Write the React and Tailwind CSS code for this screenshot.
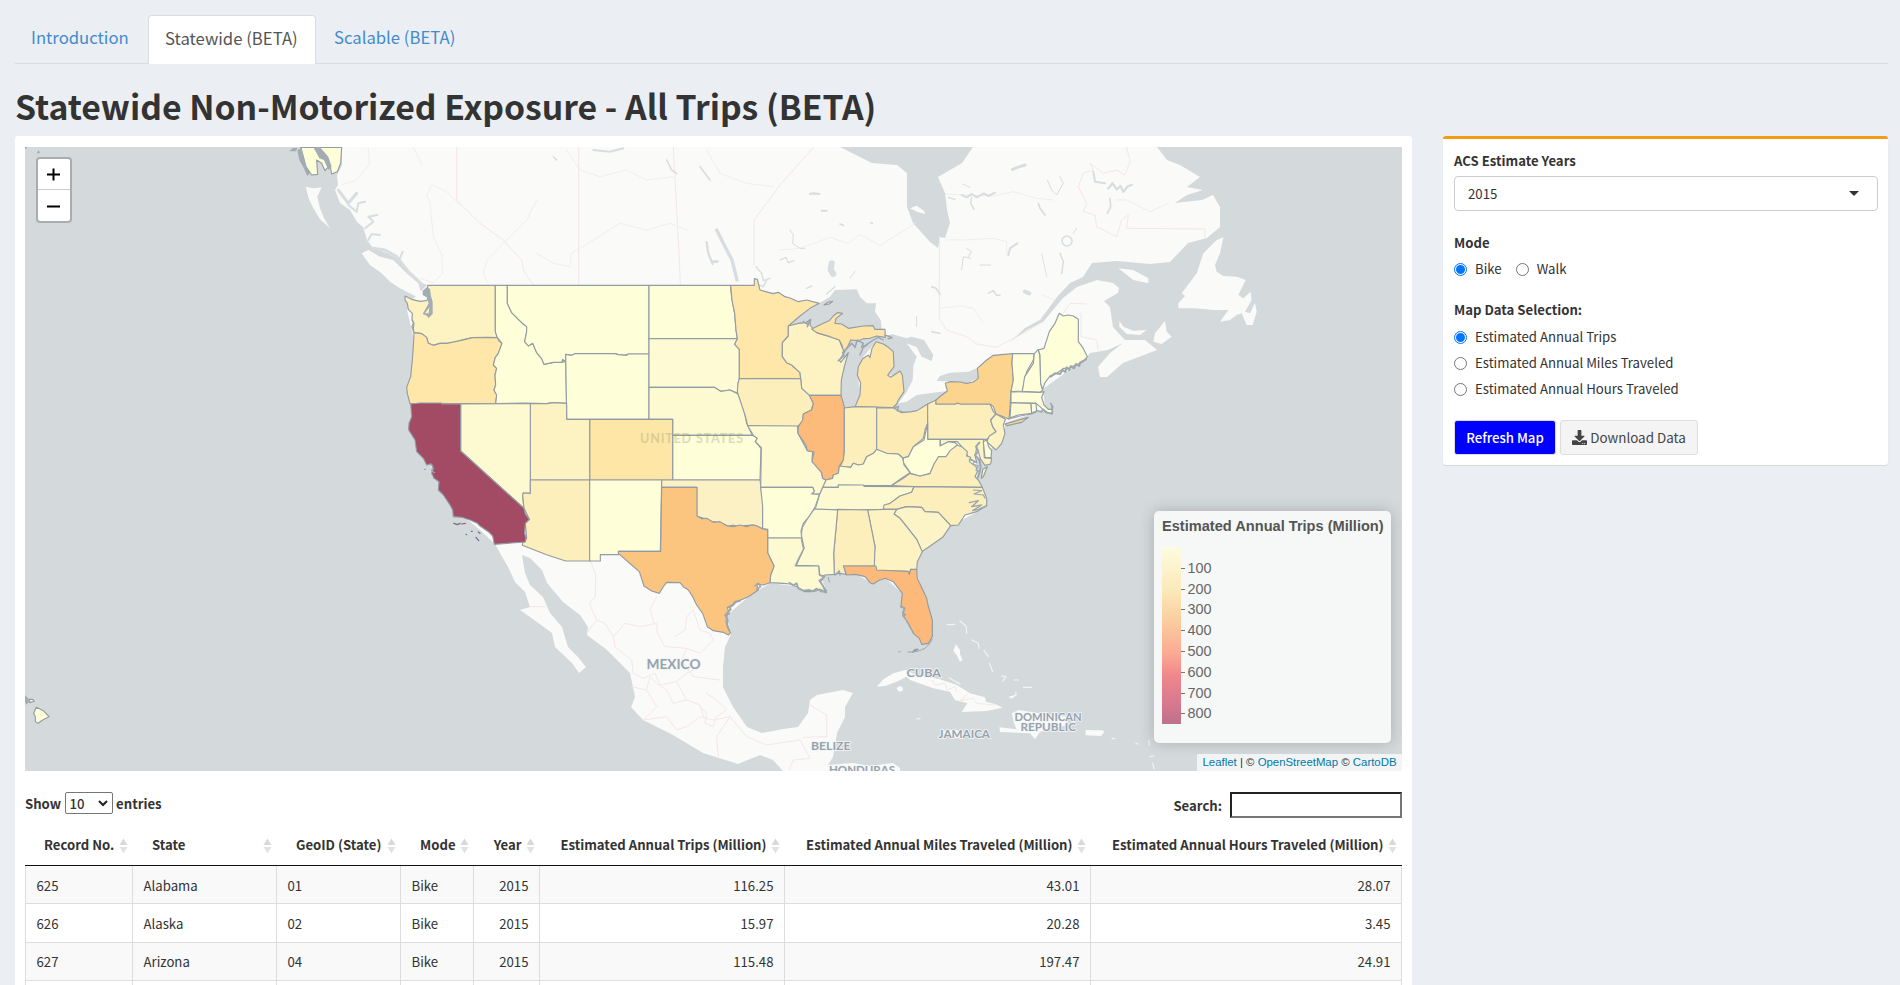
import React from "react";
import { FaDownload } from "react-icons/fa";

const LAND = "#fafaf8";
const WATER = "#d4d9dc";

// Coordinate frames for map geometry, in thirds of a map unit
const FRAME = {
  nw: "translate(20 140) scale(0.333333)",
  west: "translate(380 260) scale(0.333333)",
  east: "translate(720 260) scale(0.333333)",
  south: "translate(500 460) scale(0.333333)",
  canada: "translate(780 140) scale(0.333333)",
  carib: "translate(860 580) scale(0.333333)",
  hawaii: "translate(20 530) scale(0.333333)",
};

const CONTINENT =
  "342,147 342,165 337,175 338,185 335,190 340,203 350,210 357,222 363,227 367,240 373,248 387,253 400,260 410,272 420,282 427,285 412,300 407,310 414,340 410,390 412,425 430,465 450,505 480,530 495,544 500,553 508,567 515,582 525,592 530,607 520,610 537,622 552,633 555,647 572,663 579,673 586,667 578,657 568,647 562,627 550,613 543,597 530,585 525,573 522,555 530,558 542,570 547,583 563,602 580,615 588,627 587,635 607,650 630,673 635,697 631,707 643,720 673,735 703,753 738,764 760,755 773,760 783,771 783,775 900,775 900,768 893,763 870,766 853,763 828,765 833,757 837,733 845,717 845,707 853,693 843,690 817,695 810,700 808,713 798,727 783,729 762,733 747,727 733,707 723,687 723,667 725,647 731,634 727,615 753,593 771,583 807,588 825,587 820,575 856,574 873,584 885,578 902,593 913,633 930,635 930,615 916,570 917,563 922,551 951,526 977,512 984,506 979,487 976,460 990,450 1005,433 1005,423 1037,412 1045,407 1043,389 1087,357 1090,353 1108,350 1123,343 1110,353 1098,367 1100,377 1107,377 1123,363 1157,350 1145,340 1125,340 1113,327 1110,307 1104,301 1118,293 1119,288 1113,283 1097,280 1077,287 1063,298 1043,322 1027,330 1010,342 1025,328 1040,320 1057,297 1070,283 1083,277 1092,263 1117,261 1150,264 1170,262 1188,243 1207,238 1220,227 1220,207 1213,195 1202,200 1175,203 1187,195 1203,190 1187,187 1200,177 1180,165 1167,160 1157,147 973,147 962,163 938,177 945,193 947,210 950,223 945,238 940,237 938,248 930,242 913,223 907,207 907,173 897,165 872,163 840,147";

const ISLANDS = [
  ["nw", "1025,340 1045,330 1080,350 1120,360 1160,400 1195,430 1205,465 1185,468 1140,445 1110,425 1085,400 1050,375"],
  ["nw", "857,140 880,145 905,142 892,170 900,205 912,235 930,265 900,238 880,205 866,175"],
  ["canada", "1330,292 1310,300 1270,340 1250,400 1235,420 1205,460 1215,468 1195,490 1195,505 1245,505 1300,510 1345,510 1320,545 1350,540 1370,525 1385,520 1400,555 1418,555 1430,515 1425,488 1410,520 1395,515 1415,480 1412,455 1390,475 1375,465 1397,420 1370,410 1330,408 1310,395 1305,375 1320,340"],
  ["canada", "1018,542 1030,560 1060,572 1100,570 1080,585 1040,582 1018,560"],
  ["canada", "1120,605 1125,580 1155,543 1160,575 1175,590 1145,612"],
  ["canada", "1015,385 1060,390 1105,415 1105,430 1060,420"],
  ["canada", "390,205 410,197 432,212 435,222 412,216"],
  ["carib", "50,320 70,298 100,280 135,270 170,285 240,298 290,315 330,340 375,352 378,365 405,372 428,383 380,393 305,396 322,370 285,360 270,335 220,325 150,300 140,290 110,305 75,318"],
  ["carib", "110,325 118,318 128,322 128,332 116,335"],
  ["carib", "455,400 475,390 540,400 620,410 620,435 570,450 540,455 525,478 510,460 420,456 418,442 470,448 462,430"],
  ["carib", "677,450 728,451 733,456 723,468 677,466"],
  ["carib", "245,452 290,450 325,465 290,475 250,465"],
  ["carib", "283,205 288,193 300,210 300,222 308,240 300,246 290,225 280,212"],
  ["carib", "446,350 465,345 468,332 470,345 455,356"],
];

const LAKES = [
  ["east", "205,198 240,165 298,130 330,110 345,90 410,88 420,110 440,130 468,130 465,155 482,180 485,205 492,215 497,232 515,222 560,235 575,230 612,240 640,285 635,303 605,290 590,262 560,250 590,290 580,318 578,360 560,395 535,430 560,425 590,405 640,398 682,393 650,418 623,432 575,457 545,458 520,443 550,350 503,345 520,275 468,245 430,290 412,345 422,400 400,445 372,446 362,400 364,350 372,280 360,240 275,215 240,190"],
  ["east", "650,362 660,348 690,338 745,335 770,325 775,355 740,370 690,365"],
];

const A = "#fefed8", B = "#fdf9d0", C = "#fdf2c1", D = "#fdefbc", E = "#fee7a9";
const STATES = [
  ["west", C, "143,76 346,76 346,215 352,233 320,232 278,233 240,242 225,247 200,250 180,250 160,256 145,250 140,232 125,221 102,218 100,205 102,190 96,180 97,160 85,148 82,130 75,120 75,108 95,118 120,124 140,122 150,100 143,90"],
  ["west", E, "102,218 125,221 140,232 145,250 160,256 180,250 200,250 240,242 278,233 352,233 357,243 366,250 355,280 346,292 340,315 350,325 345,345 347,375 342,390 350,405 347,431 185,431 90,431 82,400 80,382 92,350 97,300 100,260"],
  ["west", A, "346,76 382,76 382,130 395,158 415,178 430,192 440,200 440,215 434,245 445,258 458,250 470,278 485,296 492,313 520,307 545,307 557,304 560,430 520,428 500,431 430,429 347,431 350,405 342,390 347,375 345,345 350,325 340,315 346,292 355,280 366,250 352,233 346,215"],
  ["west", A, "382,76 807,76 807,282 745,282 735,286 715,284 705,281 585,281 575,286 557,283 557,305 548,298 545,307 520,307 492,313 485,296 470,278 458,250 445,258 434,245 440,215 440,200 430,192 415,178 395,158 382,130"],
  ["west", A, "557,283 575,286 585,281 705,281 715,284 740,286 745,282 807,282 807,478 560,478"],
  ["west", A, "807,76 1051,76 1056,120 1064,160 1068,210 1072,236 807,236"],
  ["west", "#fefbd4", "807,236 1072,236 1064,253 1078,268 1078,356 1074,370 1074,400 1050,390 1022,394 1003,382 807,382"],
  ["west", B, "807,382 1003,382 1022,394 1050,390 1074,402 1090,440 1100,490 1117,526 878,526 878,478 807,478"],
  ["west", A, "878,526 1117,526 1133,535 1126,545 1143,565 1140,660 878,660"],
  ["west", "#fee6a6", "629,478 878,478 878,660 629,660"],
  ["west", C, "451,431 500,431 520,428 560,430 560,478 629,478 629,660 451,660"],
  ["west", B, "242,432 451,431 451,700 430,699 428,706 432,745 242,573"],
  ["west", D, "451,660 629,660 629,903 557,903 500,884 427,856 428,848 440,835 436,790 448,778 432,745 428,706 430,699 451,700"],
  ["west", A, "629,660 845,660 841,874 716,874 716,884 661,884 661,903 629,903"],
  ["west", "#fbf1c4", "845,660 1140,660 1148,720 1148,806 1120,795 1095,797 1075,801 1060,795 1045,799 1030,792 1015,794 1005,785 990,789 970,775 950,768 950,682 845,682"],
  ["west", "#a34a65", "92,432 120,429 185,429 185,432 242,432 242,573 432,745 436,762 448,778 436,790 434,820 438,835 436,846 343,853 338,828 325,815 300,798 292,790 270,780 245,772 220,770 218,750 210,735 190,705 175,690 177,665 162,655 155,640 160,625 155,612 140,615 130,595 110,575 105,540 86,510 87,490 95,470"],
  ["east", E, "32,76 103,76 103,56 112,58 120,90 145,97 160,101 175,97 195,110 210,114 235,125 260,120 298,130 270,145 240,168 205,198 205,228 187,248 187,290 200,308 215,315 240,338 242,356 58,356 58,268 44,253 52,236 48,210 44,160 36,120"],
  ["east", C, "205,198 235,190 258,188 272,178 270,195 280,207 290,218 330,230 358,240 366,262 372,270 372,280 358,300 362,307 376,290 385,278 373,320 364,360 363,406 268,406 245,385 242,356 240,338 215,315 200,308 187,290 187,248 205,228"],
  ["east", "#fee5a5", "275,207 310,190 328,182 340,168 352,158 368,160 348,175 345,190 365,192 385,205 430,198 460,197 464,208 495,208 496,232 470,228 450,235 430,236 415,242 392,240 382,262 372,278 366,256 358,240 330,230 290,218"],
  ["east", "#fee5a5", "468,245 490,252 505,262 520,275 522,320 503,345 512,352 540,333 547,345 552,395 535,420 530,432 518,443 405,440 420,405 422,370 412,345 415,320 428,296 445,285 450,293 456,265"],
  ["east", D, "58,356 242,356 245,385 268,406 280,430 274,450 250,462 248,485 232,500 83,497 75,465 60,420 52,395 54,370"],
  ["east", B, "83,497 232,498 234,520 262,572 278,574 276,600 305,638 308,655 318,660 308,690 300,702 275,702 283,694 278,682 122,682 124,563 106,545 112,535 100,526"],
  ["east", "#fdbb7b", "268,406 363,406 373,440 373,570 370,600 358,618 355,640 340,645 338,655 318,660 308,655 305,638 276,605 282,576 262,572 258,556 234,520 235,500 248,480 250,462 275,450 280,430"],
  ["east", D, "373,444 405,440 470,441 470,568 460,580 440,590 430,612 415,615 400,610 392,622 360,620 370,600 373,575"],
  ["east", "#fdebb5", "470,444 520,443 545,458 575,455 590,452 623,432 623,490 615,510 610,535 580,560 565,590 548,594 535,582 500,580 485,575 470,568"],
  ["east", D, "623,432 648,420 648,432 706,432 712,429 722,432 810,432 820,455 828,462 812,480 818,500 828,515 800,538 623,538"],
  ["east", "#fdd48e", "648,432 648,420 662,408 682,393 676,370 690,365 720,366 740,370 760,366 775,355 772,325 800,300 820,286 878,281 876,310 880,360 873,395 870,440 867,478 845,468 828,462 820,440 810,432 722,432 712,429 706,432"],
  ["east", "#fdd48e", "855,492 880,485 925,472 905,487 862,497"],
  ["east", C, "828,462 856,478 850,495 855,520 845,550 828,570 800,545 808,528 828,515 818,500 812,480"],
  ["east", A, "878,281 943,281 940,300 920,335 907,393 873,395 880,360 876,310"],
  ["east", A, "943,281 955,268 960,290 962,370 968,390 960,397 907,394 914,350 940,310"],
  ["east", A, "955,270 972,265 988,215 1005,190 1018,160 1030,168 1045,165 1060,168 1075,178 1075,245 1088,262 1102,290 1090,305 1060,318 1045,325 1030,325 1010,340 990,348 975,368 968,388 962,370 960,285"],
  ["east", A, "873,395 960,397 972,395 965,412 972,435 985,448 996,448 995,436 998,460 978,458 960,440 948,430 873,428"],
  ["east", "#fbfad2", "873,428 933,430 935,460 895,465 870,473"],
  ["east", A, "933,430 948,430 950,452 935,460"],
  ["east", C, "660,538 790,538 793,593 815,595 812,612 795,616 782,598 770,560 766,590 770,608 748,595 735,575 725,560 712,545 685,545 662,558"],
  ["east", A, "790,545 800,540 806,560 815,572 813,593 795,593"],
  ["east", D, "513,677 550,655 570,640 600,648 630,640 642,610 655,590 680,582 700,552 725,560 742,575 740,588 752,592 748,605 768,620 772,635 765,650 775,660 787,682 580,680"],
  ["east", D, "802,620 790,650 784,655 788,628"],
  ["east", A, "623,490 623,538 660,538 660,558 685,545 705,548 712,555 690,572 678,590 655,590 642,612 630,640 600,648 572,640 550,608 550,594 565,590 580,560 612,540"],
  ["east", B, "470,568 500,580 535,582 548,594 552,615 570,638 545,655 513,677 430,677 355,675 355,682 308,682 318,660 338,655 340,645 355,640 358,618 392,622 400,610 415,615 430,612 440,590 460,580"],
  ["east", B, "308,682 355,682 355,675 430,675 432,679 582,680 575,697 540,708 510,730 490,748 400,750 280,747 292,725 298,705"],
  ["east", D, "582,680 787,682 800,715 800,737 770,755 735,765 715,795 692,797 655,757 615,755 605,742 560,740 530,748 490,748 492,735 510,730 540,708 575,697"],
  ["east", "#fcf4c6", "530,748 560,740 605,742 615,755 655,757 692,797 668,832 625,862 605,875 590,838 560,800 540,775 522,762"],
  ["east", C, "443,750 490,748 530,748 522,762 540,775 560,800 590,838 607,875 592,905 590,930 572,928 567,942 560,934 470,932 460,915 465,860"],
  ["east", D, "353,748 443,750 465,860 463,918 372,918 378,943 358,940 343,943 341,880"],
  ["east", B, "280,747 353,750 341,880 343,943 315,945 300,950 296,918 228,916 240,890 252,865 243,820 250,790 268,768"],
  ["east", A, "122,682 278,682 283,694 275,702 298,703 288,740 268,768 250,790 243,812 245,834 143,834 143,808 128,806 128,740"],
  ["south", B, "803,234 905,234 912,265 900,290 888,318 956,318 958,345 975,348 962,365 970,380 980,393 965,396 950,385 935,395 915,395 890,380 870,372 850,370 810,368 812,345 822,318 803,278"],
  ["south", "#fcc57f", "485,82 591,82 591,168 605,176 620,175 640,187 660,185 680,197 700,200 720,195 740,200 755,195 770,197 788,207 803,210 803,278 822,318 812,345 810,368 790,375 770,372 775,390 745,410 710,425 695,440 682,442 688,462 674,465 684,480 682,500 692,518 685,525 670,517 640,512 622,500 608,460 590,435 578,410 565,390 552,382 540,368 500,367 490,380 478,400 455,393 432,378 418,335 395,315 355,280 355,274 482,274"],
  ["south", "#fdb97a", "1030,318 1128,318 1130,330 1225,334 1228,343 1232,328 1250,328 1252,355 1280,415 1284,435 1297,480 1297,530 1285,550 1265,553 1258,535 1240,520 1225,490 1208,465 1214,445 1203,438 1207,400 1180,365 1155,355 1135,362 1120,372 1110,368 1095,350 1068,343 1040,345"],
  ["south", "#fdb97a", "1237,577 1245,568 1255,568"],
  ["nw", A, "842,22 925,22 965,22 962,70 952,95 935,102 930,75 915,92 905,70 890,60 893,103 875,105 858,80 850,50"],
  ["hawaii", A, "49,532 70,542 87,560 68,570 54,580 46,574 46,560 41,550"],
  ["hawaii", A, "28,508 38,508 43,514 30,518"],
  ["east", E, "312,135 325,126 338,124 328,132"],
];

const ISLETS = [
  ["west", "#a2acb3", "128,92 140,82 150,86 152,105 158,125 158,162 145,175 142,168 128,162 146,130 140,112 128,105"],
  ["west", C, "148,142 135,160 146,160"],
  ["nw", "#a2acb3", "832,30 845,24 856,75 870,100 862,108 850,82 838,60"],
  ["nw", "#a2acb3", "880,22 900,22 925,50 935,80 925,90 912,60 898,55 890,40"],
  ["nw", "#a2acb3", "808,34 818,24 832,24 828,34"],
  ["hawaii", "#a2acb3", "15,496 28,508 28,516 18,524 15,514"],
  ["nw", "#a2acb3", "50,40 56,30 60,40"],
  ["nw", "#8f9bb0", "15,20 22,20 17,28"],
];

// Dense shoreline: islands, bays and estuaries drawn as broken strokes
const SHORE = [
  ["east", "1098,298 1080,308 1078,318 1068,312 1062,325 1052,318 1048,330 1040,322 1036,336 1028,330 1020,342 1005,340 992,350", 2],
  ["east", "952,452 965,456 970,448 982,458 996,462 998,440 992,430", 1.6],
  ["east", "870,476 900,468 935,462 950,455", 1.2],
  ["east", "778,548 768,560 775,575 765,585 778,600 782,620 778,640 772,655", 2],
  ["east", "748,598 765,605 758,612 775,618 768,630 778,635", 1.2],
  ["east", "760,690 785,692 762,702 790,705 795,715", 1.2],
  ["east", "748,728 775,722 755,740 785,735 758,752 775,748 800,737", 1.4],
  ["east", "355,302 372,288 368,278 380,265 395,250 405,262 412,240 430,250 425,262 440,255", 1.6],
  ["east", "420,285 430,262 445,250 460,240 475,232 490,240", 1.4],
  ["east", "495,226 505,228 516,233 505,236", 1.6],
  ["east", "250,185 262,192 272,180 262,200", 1.6],
  ["east", "520,443 535,440 532,452 548,456", 1.6],
  ["south", "868,368 880,376 890,370 895,385 910,392 928,390 940,394 960,388 978,398 968,376 958,362 972,352 960,345", 1.8],
  ["south", "985,352 988,366", 1],
  ["south", "1005,345 1018,332 1020,345", 1.4],
  ["south", "765,378 775,370 782,380 770,388", 1.6],
  ["south", "720,422 704,426 700,434 688,440 692,448 680,460 680,490 688,512", 2],
  ["south", "1202,440 1214,445 1208,458 1216,464 1210,470", 1.6],
  ["south", "1220,482 1228,498 1240,518", 1.2],
  ["south", "1297,538 1288,552 1275,565 1258,572 1242,576 1224,576", 1],
  ["south", "1196,575 1200,575", 1],
  ["west", "97,180 100,190 96,200 101,215", 1.4],
  ["west", "150,612 158,620 155,632 164,638", 1.2],
  ["east", "225,918 235,895 250,868 244,840 246,805 262,778 285,740 298,705 316,665", 1],
];

const CHANNEL = [
  ["222,790 232,794 240,790", 1.4], ["244,792 256,790", 1.2], ["258,823 260,824", 1.2],
  ["274,814 277,814", 1.2], ["288,832 296,842", 1.2], ["295,816 300,820", 1.2], ["134,628 136,628", 0.8],
];

const BORDERS = [
  ["canada", "-78,375 -78,240 0,135 100,22"],
  ["canada", "478,290 478,535 500,570 560,590 590,612 650,622 690,600 740,575 780,550"],
  ["canada", "1040,22 1050,65 1035,105 1010,90 970,100 945,80 930,70 940,90 910,100 895,140 920,190 910,215 945,225 950,260 1010,290 1025,240 1045,225 1040,265 1275,267 1275,295"],
  ["canada", "850,520 870,490 920,492"],
  ["canada", "903,520 903,590 950,600 955,630"],
  ["west", "596,-339 596,74"],
  ["west", "230,-339 230,-180 300,-110 370,-60 425,0 432,35 450,60 460,74"],
  ["west", "880,-339 898,0 901,74"],
  ["south", "272,302 287,345 286,410 268,430 290,480 260,520"],
  ["south", "290,480 315,490 340,530 375,490 420,500 470,490 472,520 495,560 560,565 600,580 640,540 630,520 600,510 580,450 560,470 555,510 525,530"],
  ["south", "470,410 450,450 462,490"],
  ["south", "340,530 345,560 395,600 400,640 430,655 465,640 480,675 530,665 560,640 600,620"],
  ["south", "560,565 545,600 580,650 660,660"],
  ["south", "395,680 440,690 470,740 430,780 500,770 530,810 560,800 600,770 640,780 690,770 740,830 800,855 900,840 930,895 880,900 868,928"],
  ["south", "440,690 450,650 470,670 500,690 520,730 560,720"],
  ["south", "600,740 620,760 615,790 640,800 650,770 680,750 650,720 620,700"],
  ["south", "530,665 560,720 600,735 610,770"],
  ["south", "690,770 650,830 655,890"],
  ["south", "930,735 980,765 980,830 910,832"],
  ["south", "88,440 135,440"],
  ["carib", "215,300 225,315 255,310 262,330 285,320 290,335"],
  ["carib", "325,340 300,362 340,355 350,370 405,375"],
];

const RIVERS = [
  ["canada", "0,330 60,325 150,292 205,310 240,283 300,317 350,285 405,250"],
  ["canada", "495,162 560,165 640,168 700,155 770,175 820,180"],
  ["canada", "1005,180 1040,180 1110,215 1165,190"],
  ["canada", "500,300 560,300 640,295 680,305 680,345"],
  ["canada", "785,465 825,480"],
  ["canada", "480,505 540,498 580,505 610,550"],
  ["nw", "1045,25 1048,75 1025,100 1010,120 965,135"],
  ["nw", "1320,195 1280,155 1235,135 1220,165 1230,190 1240,290 1265,345 1268,400 1240,428 1200,415"],
  ["nw", "1180,22 1205,72"],
  ["west", "325,73 310,40 322,0 380,-60 440,-120 470,-180"],
  ["west", "470,-20 520,10 570,20 574,-20 640,-60 720,-110 800,-90 870,-110 920,-90"],
  ["west", "560,-330 600,-270 660,-250 740,-270 800,-240 880,-250"],
  ["west", "980,-330 1020,-260 1100,-230 1180,-220"],
];

const INLETS = [
  ["nw", "955,150 985,190 1010,160", 3],
  ["nw", "985,195 1010,215 1015,190 1035,185", 2],
  ["nw", "1035,265 1060,245 1045,230 1072,225", 2],
  ["nw", "1045,300 1055,282 1080,285", 2],
  ["nw", "1060,325 1095,330 1130,350 1165,395 1205,432", 3],
  ["nw", "1140,355 1148,335", 2],
  ["canada", "545,165 560,172 575,162 590,172 612,160 625,168 645,158", 2],
  ["canada", "575,172 572,190 582,208", 1.4],
  ["canada", "505,172 525,178", 1.2],
  ["canada", "548,132 570,142", 1],
  ["canada", "698,88 712,82 735,75", 3],
  ["canada", "802,120 815,150 830,165 850,130 840,110", 1],
  ["canada", "940,95 945,125 975,130", 2],
  ["canada", "985,145 998,130 1010,148 1022,138 1030,155 1042,140 1055,135", 2.4],
  ["canada", "990,175 992,200 982,220", 1.6],
  ["canada", "685,345 690,325 712,310", 2],
  ["canada", "840,340 850,365 845,400", 1.5],
  ["canada", "545,390 550,350 572,355", 1],
  ["canada", "600,375 632,375", 1],
  ["canada", "625,460 640,452 650,466 660,465", 1.5],
  ["canada", "735,455 748,460", 4],
  ["canada", "90,162 100,160 118,162", 2.2],
  ["canada", "125,212 140,212", 2],
  ["canada", "180,252 190,256", 1.6],
  ["canada", "273,248 277,250", 1.6],
  ["canada", "30,270 40,285 38,310 60,325 75,325", 1],
  ["canada", "0,360 18,352 25,368 42,362", 1.2],
  ["canada", "155,370 152,390 160,402", 6],
  ["canada", "80,445 95,438", 1.4],
  ["canada", "140,462 165,440", 1.4],
  ["canada", "210,415 225,395", 1],
  ["canada", "455,440 468,445 480,462", 1.6],
  ["canada", "455,575 480,580", 1.5],
  ["canada", "775,190 780,205 795,225", 1.8],
  ["canada", "785,340 800,410", 0.8],
  ["canada", "560,325 575,335 565,350", 1],
  ["canada", "410,530 410,560", 1],
  ["canada", "890,265 880,280", 1],
  ["west", "1010,-90 1030,-50 1056,0 1071,60", 3.4],
  ["west", "1000,5 1012,5", 2.6],
  ["west", "980,-54 985,-20 998,12", 2.2],
  ["west", "1128,20 1145,40 1150,62 1170,55", 1.4],
  ["west", "1130,72 1150,80 1160,60", 1.4],
  ["west", "860,-300 875,-270 890,-260", 1.6],
  ["west", "960,-280 990,-240", 1.6],
  ["west", "640,-330 690,-325 730,-335", 2],
  ["west", "520,-310 530,-300", 1.4],
];

const CAYS = [
  "262,134 285,133", "300,123 318,138 320,160", "335,180 355,190 357,205", "372,212 385,230",
  "388,250 398,275", "424,288 438,290 428,304", "462,300 476,300", "490,322 515,322",
  "170,417 180,416", "268,294 300,312", "828,490 834,492", "756,475 764,476", "866,482 868,496",
  "870,530 882,528", "878,550 882,566",
];

const LABELS = [
  ["MEXICO", 646.5, 669, 54, 13],
  ["CUBA", 906.5, 676.5, 34.5, 11.5],
  ["JAMAICA", 938.5, 737.5, 51.5, 11],
  ["DOMINICAN", 1014.5, 720.5, 67, 11],
  ["REPUBLIC", 1020.5, 731, 55.5, 11],
  ["BELIZE", 811, 750, 39.5, 11],
  ["HONDURAS", 829, 773.5, 66, 11],
];

function Line({ frame, points, color, width }) {
  return (
    <g transform={FRAME[frame]}>
      <polyline points={points} fill="none" stroke={color} strokeWidth={width * 3} strokeLinejoin="round" strokeLinecap="round" />
    </g>
  );
}

function Shape({ frame, points, fill, stroke = "none" }) {
  return (
    <g transform={FRAME[frame]}>
      <polygon points={points} fill={fill} stroke={stroke} strokeWidth="3.4" strokeLinejoin="round" />
    </g>
  );
}

function MapCanvas() {
  return (
    <svg viewBox="25 147 1377 624" className="block h-[624px] w-[1377px]">
      <rect x="25" y="147" width="1377" height="624" fill={WATER} />
      <polygon points={CONTINENT} fill={LAND} strokeLinejoin="round" />
      {ISLANDS.map(([f, p]) => <Shape key={p} frame={f} points={p} fill={LAND} />)}
      {CAYS.map((p) => <Line key={p} frame="carib" points={p} color="#f3f4f3" width={1.2} />)}
      {BORDERS.map(([f, p]) => <Line key={p} frame={f} points={p} color="#f3e4e5" width={0.9} />)}
      {RIVERS.map(([f, p]) => <Line key={p} frame={f} points={p} color="#eceded" width={0.9} />)}
      {INLETS.map(([f, p, w]) => <Line key={p} frame={f} points={p} color="#d8dde0" width={w} />)}
      <circle cx="1067" cy="241" r="5" fill="none" stroke="#d8dde0" strokeWidth="1.6" />
      {LAKES.map(([f, p]) => <Shape key={p} frame={f} points={p} fill={WATER} />)}
      {STATES.map(([f, c, p]) => <Shape key={p} frame={f} points={p} fill={c} stroke="#929ca3" />)}
      {ISLETS.map(([f, c, p]) => <Shape key={p} frame={f} points={p} fill={c} />)}
      {SHORE.map(([f, p, w]) => <Line key={p} frame={f} points={p} color="#9da7ae" width={w} />)}
      {CHANNEL.map(([p, w]) => <Line key={p} frame="west" points={p} color="#7d6a86" width={w} />)}
      <text x="640" y="443" textLength="103" fontSize="12.5" fontWeight="700" fill="#8a9468" opacity="0.3" className="font-[Lato,sans-serif]">UNITED STATES</text>
      {LABELS.map(([t, x, y, w, s]) => (
        <text key={t} x={x} y={y} textLength={w} lengthAdjust="spacingAndGlyphs" fontSize={s} fontWeight="700" fill="#94a3ae" stroke="#f4f5f5" strokeWidth="1.6" paintOrder="stroke" className="font-[Lato,sans-serif]">{t}</text>
      ))}
    </svg>
  );
}

function Legend() {
  return (
    <div className="absolute top-[364px] right-[11px] h-[232px] w-[237px] rounded-[5px] bg-[#f6f8f7] px-2 pt-1.5 font-['Liberation_Sans',sans-serif] text-[14px] text-[#555] shadow-[0_0_15px_rgba(0,0,0,0.2)]">
      <div className="h-[30px] text-[14.6px] leading-[18px] font-bold whitespace-nowrap">Estimated Annual Trips (Million)</div>
      <div className="flex">
        <div className="h-[177px] w-[19px] bg-[linear-gradient(180deg,#fdfce0_0%,#fbe8b8_25%,#fbd0a0_40%,#fbaa93_60%,#ee868b_73%,#d97990_88%,#bb728b_100%)]" />
        <div className="flex flex-col pt-[10.5px]">
          {[100, 200, 300, 400, 500, 600, 700, 800].map((n) => (
            <div key={n} className="flex h-[20.8px] items-center gap-[2.5px] leading-[20px]">
              <span className="mt-[1px] h-px w-1 bg-[#777]" />
              <span className="text-[14.4px] text-[#666]">{n}</span>
            </div>
          ))}
        </div>
      </div>
    </div>
  );
}

function Radio({ on, label }) {
  return (
    <span className="flex h-[26px] items-center gap-2">
      <span className={on ? "flex size-[13px] items-center justify-center rounded-full border border-[#0075ff] bg-white" : "size-[13px] rounded-full border border-[#767676] bg-white"}>
        {on && <span className="size-[9px] rounded-full bg-[#0075ff]" />}
      </span>
      <span className="-mt-0.5">{label}</span>
    </span>
  );
}

const COLUMNS = [
  ["Record No.", "w-[108px]", false],
  ["State", "w-[144px]", false],
  ["GeoID (State)", "w-[124px]", false],
  ["Mode", "w-[73px]", false],
  ["Year", "w-[66px]", true],
  ["Estimated Annual Trips (Million)", "w-[245px]", true],
  ["Estimated Annual Miles Traveled (Million)", "w-[306px]", true],
  ["Estimated Annual Hours Traveled (Million)", "w-[311px]", true],
];

const ROWS = [
  ["625", "Alabama", "01", "Bike", "2015", "116.25", "43.01", "28.07"],
  ["626", "Alaska", "02", "Bike", "2015", "15.97", "20.28", "3.45"],
  ["627", "Arizona", "04", "Bike", "2015", "115.48", "197.47", "24.91"],
  ["", "", "", "", "", "", "", ""],
];

function DataTable() {
  return (
    <div>
      <div className="flex h-[43px] border-b border-[#111] text-[13.15px]">
        {COLUMNS.map(([name, width, right]) => (
          <div key={name} className={`${width} relative flex shrink-0 items-center pr-[18.5px] pl-[19px] font-bold whitespace-nowrap ${right ? "justify-end" : ""}`}>
            {name}
            <svg viewBox="0 0 9 16" className="absolute top-[15px] right-[5px] h-4 w-[9px]">
              <path d="M4.5 0.5 8.5 7H0.5Z" fill="#d9d9d9" />
              <path d="M4.5 15.5 8.5 9H0.5Z" fill="#e2e2e2" />
            </svg>
          </div>
        ))}
      </div>
      {ROWS.map((row, r) => (
        <div key={r} className={`flex h-[38.3px] border-b border-l border-[#ddd] ${r % 2 ? "bg-white" : "bg-[#f9f9f9]"}`}>
          {row.map((cell, i) => (
            <div key={COLUMNS[i][0]} className={`${COLUMNS[i][1]} flex shrink-0 items-center border-r border-[#ddd] px-[10.5px] pt-px first:w-[107px] ${COLUMNS[i][2] ? "justify-end" : ""}`}>
              {cell}
            </div>
          ))}
        </div>
      ))}
    </div>
  );
}

export default function App() {
  return (
    <div className="h-[985px] w-[1900px] overflow-hidden bg-[#ebeff4] pt-[15px] pr-3 pl-[15px] font-['Noto_Sans_CJK_SC',sans-serif] text-[13.2px] leading-[21px] text-[#333]">
      <nav className="flex h-[49px] border-b border-[#d9dde0] text-[16.7px] text-[#428bca]">
        <a className="flex h-12 w-[133px] items-center px-4 pb-1">Introduction</a>
        <a className="flex h-[49px] w-[168px] items-center rounded-t border border-b-0 border-[#d9dde0] bg-white px-4 pb-1 whitespace-nowrap text-[#555]">Statewide (BETA)</a>
        <a className="flex h-12 items-center px-[18px] pb-1">Scalable (BETA)</a>
      </nav>
      <h1 className="flex h-[72px] items-center pt-[12px] text-[33.75px] leading-none font-bold whitespace-nowrap text-[#333]">Statewide Non-Motorized Exposure - All Trips (BETA)</h1>
      <div className="flex items-start justify-between">
        <main className="h-[900px] w-[1397px] rounded-[3px] bg-white px-[10px] pt-[11px]">
          <div className="relative h-[624px] w-[1377px] overflow-hidden">
            <MapCanvas />
            <div className="absolute top-[10px] left-[10.5px] w-[36px] overflow-hidden rounded-[4px] border-2 border-black/20 bg-white bg-clip-padding text-black">
              <div className="flex h-[31px] items-center justify-center border-b border-[#ccc] pt-px">
                <svg viewBox="0 0 13 13" className="size-[13px]"><path d="M0 6.5H13M6.5 0.5V12.5" stroke="#000" strokeWidth="2" /></svg>
              </div>
              <div className="flex h-[31px] items-center justify-center pt-px">
                <svg viewBox="0 0 13 13" className="size-[13px]"><path d="M0 6.5H13" stroke="#000" strokeWidth="2" /></svg>
              </div>
            </div>
            <Legend />
            <div className="absolute right-0 bottom-0 flex h-[17px] w-[205px] items-center justify-center gap-[3.2px] bg-white/70 font-['Liberation_Sans',sans-serif] text-[11.4px] whitespace-nowrap text-[#333]">
              <span className="text-[#0078a8]">Leaflet</span><span>|</span><span>©</span>
              <span className="text-[#0078a8]">OpenStreetMap</span><span>©</span><span className="text-[#0078a8]">CartoDB</span>
            </div>
          </div>
          <div className="flex h-[52px] items-start justify-between pt-[21px] text-[13.15px] font-bold">
            <div className="flex h-[22px] items-center gap-[3.5px]">
              Show
              <span className="flex h-[22px] w-12 items-center justify-between rounded-[2px] border border-[#767676] bg-white pr-1 pl-1 font-medium">
                10
                <svg viewBox="0 0 10 7" className="h-[7px] w-[10px]"><path d="M1 1l4 4 4-4" fill="none" stroke="#222" strokeWidth="2" /></svg>
              </span>
              entries
            </div>
            <div className="flex h-[26px] items-center gap-2">
              Search:
              <span className="h-[26px] w-[172px] border-2 border-t-[#222] border-r-[#767676] border-b-[#767676] border-l-[#222] bg-white" />
            </div>
          </div>
          <DataTable />
        </main>
        <aside className="h-[329px] w-[445px] rounded-[3px] border-t-[3px] border-[#f39c12] bg-white px-[11px] pt-[11px] shadow-[0_1px_1px_rgba(0,0,0,0.1)]">
          <div className="h-[26px] text-[13.15px] font-bold">ACS Estimate Years</div>
          <div className="flex h-[35px] w-[424px] items-center justify-between rounded border border-[#ccc] pr-[18px] pl-[13px]">
            2015
            <svg viewBox="0 0 10 5" className="h-[5px] w-[10px]"><path d="M0 0H10L5 5Z" fill="#333" /></svg>
          </div>
          <div className="mt-[21px] h-[24px] text-[13.15px] font-bold">Mode</div>
          <div className="flex gap-[14px]"><Radio on label="Bike" /><Radio label="Walk" /></div>
          <div className="mt-[17px] h-[25px] text-[13.15px] font-bold">Map Data Selection:</div>
          <div className="flex flex-col">
            <Radio on label="Estimated Annual Trips" />
            <Radio label="Estimated Annual Miles Traveled" />
            <Radio label="Estimated Annual Hours Traveled" />
          </div>
          <div className="mt-[18px] flex h-[35px] items-center gap-1 whitespace-nowrap">
            <span className="flex h-[35px] w-[102px] items-center justify-center rounded-[3px] border border-[#ddd] bg-[#0000ff] font-medium text-white">Refresh Map</span>
            <span className="flex h-[35px] w-[138px] items-center justify-center gap-[3px] rounded-[3px] border border-[#ddd] bg-[#f4f4f4] text-[13.4px] text-[#444]">
              <FaDownload className="size-[15px]" />Download Data
            </span>
          </div>
        </aside>
      </div>
    </div>
  );
}
